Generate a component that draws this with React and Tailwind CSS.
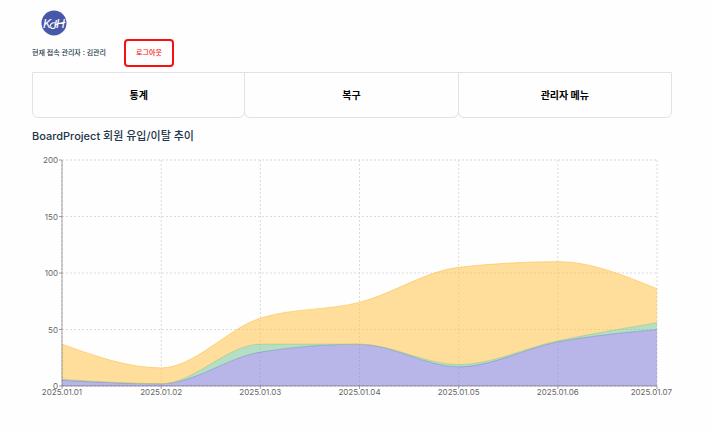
const stats = [
  { date: "2025.01.01", active: 5, left: 1, joined: 31 },
  { date: "2025.01.02", active: 2, left: 0, joined: 14 },
  { date: "2025.01.03", active: 30, left: 7, joined: 23 },
  { date: "2025.01.04", active: 37, left: 0, joined: 37 },
  { date: "2025.01.05", active: 17, left: 2, joined: 86 },
  { date: "2025.01.06", active: 39, left: 1, joined: 70 },
  { date: "2025.01.07", active: 50, left: 6, joined: 30 },
];

const series = [
  { key: "active", color: "#8884d8" },
  { key: "left", color: "#82ca9d" },
  { key: "joined", color: "#ffc658" },
];

const yTicks = [0, 50, 100, 150, 200];
const plot = { left: 30, right: 625, top: 8, bottom: 234 };

const xAt = (i) => plot.left + ((plot.right - plot.left) * i) / (stats.length - 1);
const yAt = (v) => plot.bottom - ((plot.bottom - plot.top) * v) / 200;

// Monotone cubic through the points, so the curve never overshoots a value
function curve(points) {
  const n = points.length;
  const slope = [];
  for (let i = 0; i < n - 1; i++) {
    slope.push((points[i + 1].y - points[i].y) / (points[i + 1].x - points[i].x));
  }
  const t = [];
  for (let i = 1; i < n - 1; i++) {
    const a = slope[i - 1];
    const b = slope[i];
    t[i] = (Math.sign(a) + Math.sign(b)) * Math.min(Math.abs(a), Math.abs(b), Math.abs(a + b) / 4);
  }
  t[0] = (3 * slope[0] - t[1]) / 2;
  t[n - 1] = (3 * slope[n - 2] - t[n - 2]) / 2;

  let d = "";
  for (let i = 0; i < n - 1; i++) {
    const p = points[i];
    const q = points[i + 1];
    const h = (q.x - p.x) / 3;
    d += `C${p.x + h},${p.y + h * t[i]} ${q.x - h},${q.y - h * t[i + 1]} ${q.x},${q.y}`;
  }
  return d;
}

function StackedAreaChart() {
  const levels = [stats.map((_, i) => ({ x: xAt(i), y: yAt(0) }))];
  const totals = stats.map(() => 0);
  series.forEach((s) => {
    levels.push(
      stats.map((row, i) => {
        totals[i] += row[s.key];
        return { x: xAt(i), y: yAt(totals[i]) };
      })
    );
  });

  return (
    <svg viewBox="0 0 640 250" className="block w-full overflow-visible" role="img" aria-label="회원 유입/이탈 추이">
      <g stroke="#ccc" strokeDasharray="2 2" strokeWidth="1" opacity="0.7">
        {yTicks.map((v) => (
          <line key={v} x1={plot.left} x2={plot.right} y1={yAt(v)} y2={yAt(v)} />
        ))}
        {stats.map((row, i) => (
          <line key={row.date} x1={xAt(i)} x2={xAt(i)} y1={plot.top} y2={plot.bottom} />
        ))}
      </g>

      {/* Areas */}
      {series.map((s, i) => {
        const base = [...levels[i]].reverse();
        const top = levels[i + 1];
        const line = `M${top[0].x},${top[0].y}${curve(top)}`;
        return (
          <g key={s.key}>
            <path d={`${line}L${base[0].x},${base[0].y}${curve(base)}Z`} fill={s.color} fillOpacity="0.6" />
            <path d={line} fill="none" stroke={s.color} strokeWidth="0.7" />
          </g>
        );
      })}

      {/* Axes */}
      <g stroke="#666" strokeWidth="0.6">
        <line x1={plot.left} x2={plot.left} y1={plot.top} y2={plot.bottom} />
        <line x1={plot.left} x2={plot.right} y1={plot.bottom} y2={plot.bottom} />
        {yTicks.map((v) => (
          <line key={v} x1={plot.left - 3} x2={plot.left} y1={yAt(v)} y2={yAt(v)} />
        ))}
        {stats.map((row, i) => (
          <line key={row.date} x1={xAt(i)} x2={xAt(i)} y1={plot.bottom} y2={plot.bottom + 3} />
        ))}
      </g>
      <g fill="#666" className="text-[8px]">
        {yTicks.map((v) => (
          <text key={v} x={plot.left - 4} y={yAt(v) + 3} textAnchor="end">{v}</text>
        ))}
        {stats.map((row, i) => (
          <text
            key={row.date}
            x={i === stats.length - 1 ? 640 : xAt(i)}
            y={plot.bottom + 9}
            textAnchor={i === stats.length - 1 ? "end" : "middle"}
          >
            {row.date}
          </text>
        ))}
      </g>
    </svg>
  );
}

function Logo() {
  return (
    <svg viewBox="0 0 26 26" className="size-[26px]" role="img" aria-label="KJH">
      <circle cx="13" cy="13" r="12.5" fill="#4858a8" />
      <g fill="#fff" className="font-['Roboto',sans-serif] text-[13px] italic">
        <text x="2" y="18">K</text>
        <text x="9" y="19">J</text>
        <text x="15" y="18">H</text>
      </g>
      <path d="M9 16C10 12.5 13 12.5 14 13M14 15C17 13.2 21 12.6 24 12.4" stroke="#fff" strokeWidth="1.2" fill="none" strokeLinecap="round" />
    </svg>
  );
}

const menus = ["통계", "복구", "관리자 메뉴"];

export default function App() {
  return (
    <div className="min-h-screen bg-[#fefefe] pl-8 pr-10 pt-2.5 font-['Inter','Noto_Sans_CJK_KR',sans-serif] text-[#213547]">
      <header>
        <a href="#" className="ml-[9px] block w-fit">
          <Logo />
        </a>
        <div className="mt-[3px] flex items-center gap-[18px]">
          <p className="text-[7px] leading-3 font-medium">현재 접속 관리자 : 김관리</p>
          <button type="button" className="h-7 w-[50px] rounded border-2 border-[#fa0f0f] text-[7px] font-medium text-[#fa0f0f]">
            로그아웃
          </button>
        </div>
      </header>

      <nav className="mt-[5px] grid grid-cols-3">
        {menus.map((menu) => (
          <button
            key={menu}
            type="button"
            className="-ml-px h-[46px] rounded-b-md border border-[#e2e2e2] text-[10px] font-bold text-black first:ml-0"
          >
            {menu}
          </button>
        ))}
      </nav>

      <main className="mt-2.5">
        <h1 className="text-[11px] leading-4 font-medium">BoardProject 회원 유입/이탈 추이</h1>
        <div className="mt-2">
          <StackedAreaChart />
        </div>
      </main>
    </div>
  );
}
